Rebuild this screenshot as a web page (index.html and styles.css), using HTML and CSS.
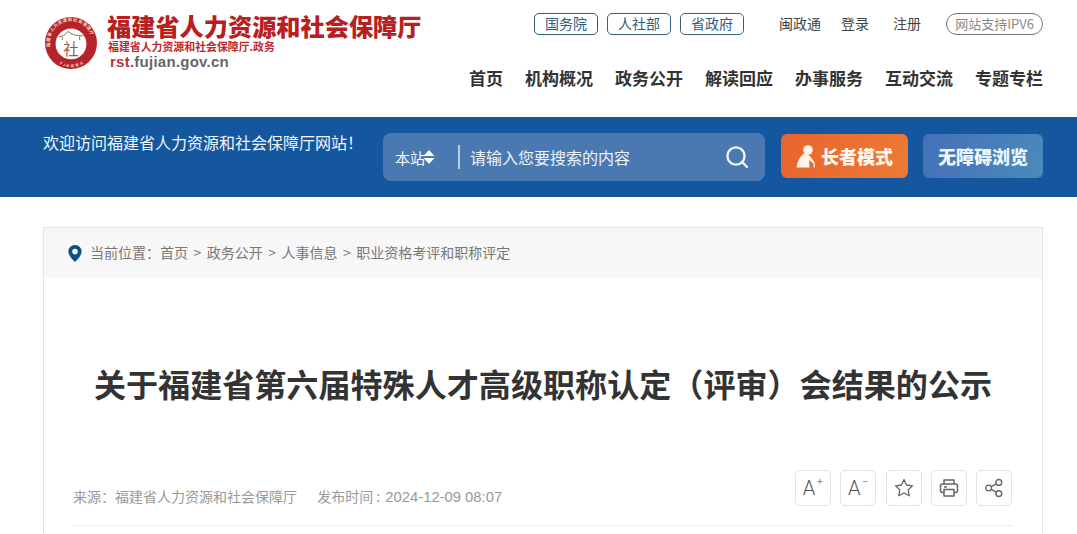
FILE: index.html
```html
<!DOCTYPE html>
<html lang="zh-CN">
<head>
    <meta charset="UTF-8">
    <meta name="viewport" content="width=device-width, initial-scale=1.0">
    <title>关于福建省第六届特殊人才高级职称认定（评审）会结果的公示</title>
    <link rel="stylesheet" href="styles.css">
</head>
<body>
    <!-- header -->
    <header class="header">
        <a class="logo" href="#">
            <svg class="logo-mark" width="52" height="52" viewBox="0 0 54 54">
                <defs>
                    <path id="ringTop" d="M5.5 31 A22 22 0 1 1 48.5 31"/>
                    <path id="ringBottom" d="M11 46 A24 24 0 0 0 43 46"/>
                </defs>
                <circle cx="27" cy="27" r="27" fill="#b5242a"/>
                <circle cx="27" cy="28" r="16" fill="#fff"/>
                <text class="ring-text" font-size="4.6" fill="#f3d9c0"><textPath href="#ringTop" textLength="66">福建省人力资源和社会保障厅</textPath></text>
                <text class="ring-text" font-size="3.6" fill="#f6e2c8"><textPath href="#ringBottom" textLength="26" startOffset="5">F J M 有 意 义</textPath></text>
                <path d="M14 21 Q20 20.5 24 15 Q29 20 40 19.5 M18 21 V24 M36 20 V24" fill="none" stroke="#8a6a5c" stroke-width="1"/>
                <text class="logo-char" x="27" y="39.5" font-size="16" text-anchor="middle" fill="#9b5a4d">社</text>
            </svg>
            <div class="logo-text">
                <div class="logo-title">福建省人力资源和社会保障厅</div>
                <div class="logo-sub">福建省人力资源和社会保障厅.政务</div>
                <div class="logo-url"><span class="red">rst</span>.fujian.gov.cn</div>
            </div>
        </a>
        <div class="header-right">
            <div class="top-links">
                <a class="pill" href="#">国务院</a>
                <a class="pill" href="#">人社部</a>
                <a class="pill" href="#">省政府</a>
                <a class="top-link first" href="#">闽政通</a>
                <a class="top-link" href="#">登录</a>
                <a class="top-link" href="#">注册</a>
                <span class="ipv6">网站支持IPV6</span>
            </div>
            <nav class="nav">
                <a href="#">首页</a>
                <a href="#">机构概况</a>
                <a href="#">政务公开</a>
                <a href="#">解读回应</a>
                <a href="#">办事服务</a>
                <a href="#">互动交流</a>
                <a href="#">专题专栏</a>
            </nav>
        </div>
    </header>

    <!-- blue search band -->
    <div class="band">
        <div class="welcome">欢迎访问福建省人力资源和社会保障厅网站！</div>
        <div class="search">
            <span class="scope">本站<svg width="12" height="16" viewBox="0 0 12 16"><path d="M6 1 L11.5 7 H.5 Z M.5 9 H11.5 L6 15 Z" fill="#fff"/></svg></span>
            <span class="search-line"></span>
            <span class="search-hint">请输入您要搜索的内容</span>
            <svg class="search-icon" width="24" height="24" viewBox="0 0 24 24" fill="none" stroke="#eaf6f8" stroke-width="2.4">
                <circle cx="11" cy="11" r="8.6"/>
                <path d="M17.2 17.2 L22 22" stroke-linecap="round"/>
            </svg>
        </div>
        <a class="btn-elder" href="#">
            <svg width="20" height="23" viewBox="0 0 20 23" fill="#fff5ea">
                <circle cx="12" cy="5" r="4.8"/>
                <path d="M8 8.5 C4.5 11 1.5 16 .5 22.5 H13.5 L13 15 L17.5 18.5 L18.6 17 L13.8 11 C12 9.5 10 8.5 8 8.5 Z"/>
                <path d="M17.6 18 H18.9 V22.5 H17.6 Z"/>
            </svg>
            长者模式
        </a>
        <a class="btn-access" href="#">无障碍浏览</a>
    </div>

    <!-- article -->
    <main class="article">
        <div class="crumbs">
            <svg class="pin" width="14" height="17" viewBox="0 0 14 17">
                <path fill-rule="evenodd" d="M7 0 C3 0 .4 3 .4 6.4 C.4 10.6 5 15 7 17 C9 15 13.6 10.6 13.6 6.4 C13.6 3 11 0 7 0 Z M7 3.8 A2.8 2.8 0 1 1 7 9.4 A2.8 2.8 0 1 1 7 3.8 Z" fill="#0d4f8b"/>
            </svg>
            <span>当前位置：</span>
            <a href="#">首页</a><i>&gt;</i>
            <a href="#">政务公开</a><i>&gt;</i>
            <a href="#">人事信息</a><i>&gt;</i>
            <a href="#">职业资格考评和职称评定</a>
        </div>
        <div class="article-body">
            <h1>关于福建省第六届特殊人才高级职称认定（评审）会结果的公示</h1>
            <div class="meta">
                <div class="meta-text">
                    <span>来源：福建省人力资源和社会保障厅</span>
                    <span class="meta-date">发布时间 : <em>2024-12-09 08:07</em></span>
                </div>
                <div class="tools">
                    <button class="tool"><span class="font-a">A<sup>+</sup></span></button>
                    <button class="tool"><span class="font-a">A<sup>−</sup></span></button>
                    <button class="tool">
                        <svg width="20" height="20" viewBox="0 0 20 20" fill="none" stroke="#666" stroke-width="1.3" stroke-linejoin="round"><path d="M10 1.6 L12.6 7 L18.5 7.8 L14.2 11.9 L15.3 17.8 L10 15 L4.7 17.8 L5.8 11.9 L1.5 7.8 L7.4 7 Z"/></svg>
                    </button>
                    <button class="tool">
                        <svg width="20" height="20" viewBox="0 0 20 20" fill="none" stroke="#666" stroke-width="1.5" stroke-linejoin="round"><path d="M5 6 V2 H15 V6"/><path d="M5 14.5 H3.4 Q1.5 14.5 1.5 12.5 V8 Q1.5 6 3.4 6 H16.6 Q18.5 6 18.5 8 V12.5 Q18.5 14.5 16.6 14.5 H15"/><path d="M5 11.5 H15 V18 H5 Z"/><path d="M5 9 H8"/></svg>
                    </button>
                    <button class="tool">
                        <svg width="20" height="20" viewBox="0 0 20 20" fill="none" stroke="#666" stroke-width="1.4"><circle cx="4.6" cy="10" r="2.9"/><circle cx="14.8" cy="4.4" r="2.9"/><circle cx="14.8" cy="15.6" r="2.9"/><path d="M7.2 8.6 L12.2 5.8 M7.2 11.4 L12.2 14.2"/></svg>
                    </button>
                </div>
            </div>
        </div>
    </main>
</body>
</html>
```

FILE: styles.css
```css
/* page */
* {
    box-sizing: border-box;
}

html, body {
    height: 534px;
}

body {
    margin: 0;
    overflow: hidden;
    background-color: #fff;
    color: #333;
    font-family: "Microsoft YaHei", "Noto Sans CJK SC", sans-serif;
}

a {
    color: inherit;
    text-decoration: none;
}

/* header */
.header {
    height: 117px;
    padding: 0 34px 0 45px;
    display: flex;
    justify-content: space-between;
}

.logo {
    display: flex;
    align-items: flex-start;
    padding-top: 17px;
}

.logo-mark {
    flex: none;
}

.ring-text {
    font-family: "Noto Sans CJK SC", sans-serif;
    font-weight: 700;
}

.logo-char {
    font-family: "Noto Sans CJK SC", sans-serif;
    font-weight: 400;
}

.logo-text {
    margin-left: 10px;
    margin-top: -4px;
}

.logo-title {
    font-size: 24.2px;
    line-height: 26px;
    font-weight: 900;
    color: #b8201f;
    white-space: nowrap;
}

.logo-sub {
    margin-left: 1px;
    font-size: 10.9px;
    line-height: 14px;
    font-weight: 700;
    color: #c0282d;
    white-space: nowrap;
}

.logo-url {
    margin-left: 3px;
    margin-top: 1px;
    font-family: "Liberation Sans", Arial, sans-serif;
    font-size: 15px;
    line-height: 16px;
    letter-spacing: .25px;
    font-weight: 700;
    color: #666;
}

.logo-url .red {
    color: #b8353a;
}

.header-right {
    padding-top: 13px;
}

.top-links {
    display: flex;
    justify-content: flex-end;
    align-items: flex-start;
    height: 22px;
}

.pill {
    width: 64px;
    height: 22px;
    margin-right: 9px;
    border: 1px solid #34607f;
    border-radius: 5px;
    text-align: center;
    font-size: 14px;
    line-height: 19px;
    color: #2f5d7e;
}

.top-link {
    margin-left: 24px;
    font-size: 14px;
    line-height: 20px;
    color: #444;
}

.top-link.first {
    margin-left: 26px;
    margin-right: -4px;
}

.top-link + .ipv6 {
    margin-left: 25px;
}

.ipv6 {
    width: 97px;
    height: 22px;
    border: 1px solid #777;
    border-radius: 11px;
    text-align: center;
    font-size: 13px;
    line-height: 19px;
    color: #8a8a8a;
    white-space: nowrap;
}

.nav {
    margin-top: 30px;
    display: flex;
    justify-content: flex-end;
    gap: 22px;
    font-size: 17px;
    line-height: 26px;
    font-weight: 700;
    color: #333;
}

/* search band */
.band {
    height: 80px;
    padding: 16px 34px 0 43px;
    display: flex;
    align-items: flex-start;
    background-color: #14579f;
    color: #fff;
}

.welcome {
    width: 340px;
    margin-top: -1px;
    font-size: 16px;
    line-height: 20px;
    color: #f1f5fa;
    white-space: nowrap;
}

.search {
    width: 382px;
    height: 48px;
    padding: 0 16px 0 12px;
    display: flex;
    align-items: center;
    background-color: #4a79b1;
    border-radius: 8px;
}

.scope {
    width: 63px;
    display: flex;
    align-items: center;
    font-size: 15px;
    color: #f4f7fb;
}

.scope svg {
    margin-left: -2px;
}

.search-line {
    width: 2px;
    height: 24px;
    background-color: #b9cde2;
}

.search-hint {
    margin-left: 10px;
    flex: 1;
    font-size: 16px;
    color: #eef3f9;
}

.btn-elder, .btn-access {
    height: 44px;
    margin-top: 1px;
    display: flex;
    align-items: center;
    justify-content: center;
    border-radius: 6px;
    font-size: 18px;
    font-weight: 900;
    color: #fff8f0;
}

.btn-elder {
    width: 127px;
    margin-left: 16px;
    gap: 5px;
    background: linear-gradient(100deg, #e8652d, #ee7935);
}

.btn-access {
    width: 120px;
    margin-left: 15px;
    background: linear-gradient(110deg, #4570b8, #4a8abb);
    color: #eef6fd;
}

/* article */
.article {
    height: 307px;
    margin: 30px 34px 0 43px;
    border: 1px solid #e4e4e4;
    border-bottom: none;
}

.crumbs {
    height: 50px;
    padding-left: 24px;
    padding-bottom: 2px;
    display: flex;
    align-items: center;
    background-color: #f7f7f7;
    font-size: 14px;
    color: #777;
}

.pin {
    margin-right: 8px;
    margin-top: 2px;
}

.crumbs i {
    margin: 0 5.5px;
    font-style: normal;
}

.article-body {
    padding: 0 29px;
}

h1 {
    margin: 81px 0 0;
    text-align: center;
    font-size: 32.1px;
    line-height: 48px;
    font-weight: 700;
    color: #333;
    white-space: nowrap;
}

.meta {
    margin-top: 63px;
    height: 56px;
    display: flex;
    justify-content: space-between;
    border-bottom: 1px solid #eee;
}

.meta-text {
    padding-top: 15px;
    font-size: 14px;
    line-height: 22px;
    color: #999;
}

.meta-date {
    margin-left: 17px;
}

.meta-date em {
    margin-left: 2px;
    font-style: normal;
    font-family: "Liberation Sans", Arial, sans-serif;
    font-size: 14.8px;
}

.tools {
    margin-right: 1px;
    display: flex;
    gap: 9.25px;
}

.tool {
    width: 36px;
    height: 36px;
    padding: 0;
    display: flex;
    align-items: center;
    justify-content: center;
    background-color: #fff;
    border: 1px solid #e2e2e2;
    border-radius: 5px;
}

.font-a {
    position: relative;
    left: -4px;
    font-family: Roboto, "Liberation Sans", sans-serif;
    font-weight: 300;
    font-size: 20px;
    line-height: 20px;
    color: #555;
}

.font-a sup {
    position: absolute;
    top: -1px;
    left: 14px;
    font-size: 11px;
    line-height: 10px;
}
```
